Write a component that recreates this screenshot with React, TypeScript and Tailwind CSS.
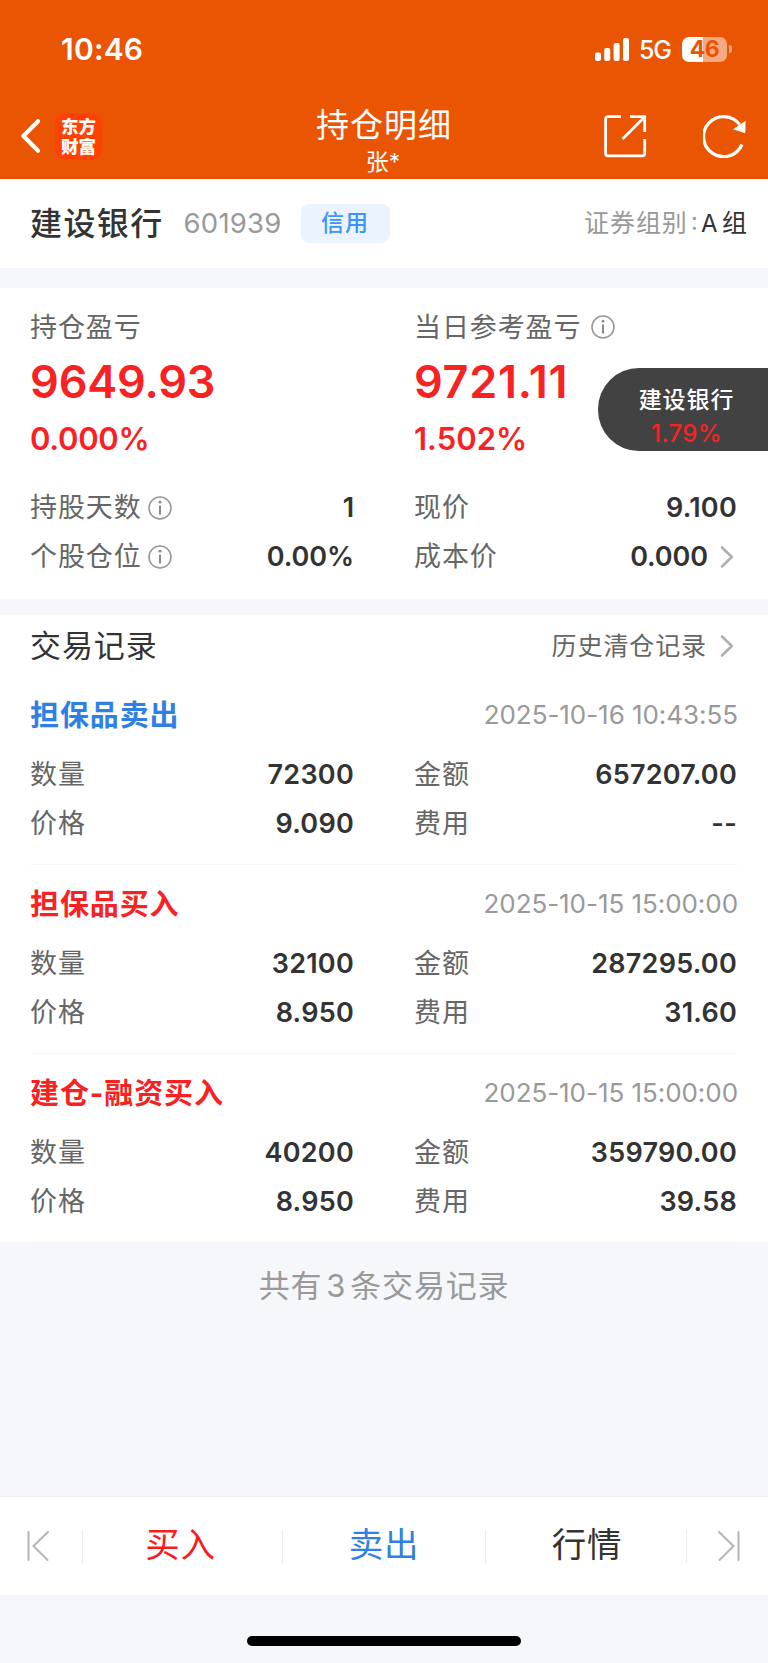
import { ReactNode } from 'react';

type Side = 'buy' | 'sell';

interface TradeRecord {
    title: string;
    side: Side;
    time: string;
    quantity: string;
    amount: string;
    price: string;
    fee: string;
}

const records: TradeRecord[] = [
    { title: '担保品卖出', side: 'sell', time: '2025-10-16 10:43:55', quantity: '72300', amount: '657207.00', price: '9.090', fee: '--' },
    { title: '担保品买入', side: 'buy', time: '2025-10-15 15:00:00', quantity: '32100', amount: '287295.00', price: '8.950', fee: '31.60' },
    { title: '建仓-融资买入', side: 'buy', time: '2025-10-15 15:00:00', quantity: '40200', amount: '359790.00', price: '8.950', fee: '39.58' },
];

const InfoIcon = () => (
    <svg className="w-6 h-6 shrink-0" viewBox="0 0 24 24" fill="none" stroke="#999" strokeWidth="1.6">
        <circle cx="12" cy="12" r="11" />
        <path d="M12 9.5v9" stroke="#888" strokeWidth="2" />
        <circle cx="12" cy="6.2" r="1.4" fill="#888" stroke="none" />
    </svg>
);

const Chevron = () => (
    <svg className="w-3.5 h-6 shrink-0" viewBox="0 0 14 24" fill="none" stroke="#b0b0b0" strokeWidth="2.6" strokeLinecap="round" strokeLinejoin="round">
        <path d="M2 2.5 11.8 12 2 21.5" />
    </svg>
);

// Status bar: clock, signal bars, network type and battery
const StatusBar = () => (
    <div className="flex items-center h-[98px] pl-[61px] pr-9 text-white">
        <span className="text-[30px] leading-none font-semibold tracking-[0.2px]">10:46</span>
        <div className="flex items-center ml-auto">
            <svg className="w-[34px] h-[23px]" viewBox="0 0 34 23" fill="#fff">
                <rect x="0" y="14.5" width="6" height="8.5" rx="2" />
                <rect x="9.2" y="10" width="6" height="13" rx="2" />
                <rect x="18.6" y="5" width="6" height="18" rx="2" />
                <rect x="28" y="0" width="6" height="23" rx="2" />
            </svg>
            <span className="ml-[10px] pt-0.5 text-[25px] leading-none font-medium tracking-[-1.2px] w-[32px]">5G</span>
            <div className="ml-[11px] flex justify-center items-center w-[45px] h-[25px] rounded-[7px] bg-[linear-gradient(90deg,#fff_47%,#f5ab81_47%)] text-[#ea5504] text-[23px] leading-none font-bold tracking-[-0.5px]">
                46
            </div>
            <div className="ml-[2px] w-[3px] h-2 rounded-r-full bg-[#f5ab81]" />
        </div>
    </div>
);

const NavBar = () => (
    <div className="grid grid-cols-[1fr_auto_1fr] h-[81px] text-white">
        <div className="flex items-center h-[76px] pl-5">
            <svg className="w-[22px] h-9" viewBox="0 0 22 36" fill="none" stroke="#fff" strokeWidth="4.2" strokeLinecap="round" strokeLinejoin="round">
                <path d="M18 3.2 3.4 18 18 32.8" />
            </svg>
            <div className="flex items-center justify-center ml-[13px] size-[47px] rounded-[10px] bg-[#ff4203]">
                <span className="w-[36px] text-[17.5px] leading-[20px] font-black text-center whitespace-normal font-['Noto_Sans_CJK_SC',sans-serif]">东方财富</span>
            </div>
        </div>
        <div className="flex flex-col items-center">
            <h1 className="mt-[8px] text-[33px] leading-[38px] font-normal tracking-[1px]">持仓明细</h1>
            <span className="mt-1 pr-0.5 text-[23px] leading-7">张*</span>
        </div>
        <div className="flex items-center justify-end h-[76px] pr-[21px]">
            <svg className="w-[43px] h-11" viewBox="0 0 43 44" fill="none" stroke="#fff" strokeWidth="2.8">
                <path d="M17 2.6H4Q1.6 2.6 1.6 5v34.4q0 2.4 2.4 2.4h34.3q2.4 0 2.4-2.4V25M26 2.6h14.7V18M18.5 25 40 3.4" />
            </svg>
            <svg className="ml-14 size-11" viewBox="0 0 44 44" fill="none" stroke="#fff" strokeWidth="3.2">
                <path d="M39 30.5A20 20 0 1 1 36.6 10.6" />
                <path d="m30 15.2 12.6-8.4-.3 12.4z" fill="#fff" stroke="none" />
            </svg>
        </div>
    </div>
);

const Field = ({ label, value, info, arrow }: { label: string; value: string; info?: boolean; arrow?: boolean }) => (
    <div className="flex items-center h-[49px]">
        <span className="text-[27px] tracking-[0.9px] text-[#666]">{label}</span>
        {info && <span className="ml-[6px] pb-px"><InfoIcon /></span>}
        <span className={`ml-auto text-[27px] font-semibold text-[#333] ${info || arrow ? 'tracking-[-0.1px]' : 'tracking-[0.25px]'}`}>{value}</span>
        {arrow && <span className="flex ml-3 mr-[3px] pb-px"><Chevron /></span>}
    </div>
);

const Profit = ({ label, value, percent, info, wide }: { label: string; value: string; percent: string; info?: boolean; wide?: boolean }) => (
    <div className="text-[#f82222]">
        <div className="flex items-center h-10 text-[27px] tracking-[0.9px] text-[#666]">
            {label}
            {info && <span className="ml-[10px] pb-0.5"><InfoIcon /></span>}
        </div>
        <div className={`mt-[9px] text-[45px] leading-[50px] font-semibold ${wide ? 'tracking-[0.7px]' : 'tracking-[-0.15px]'}`}>{value}</div>
        <div className={`mt-[13px] text-[31px] leading-[38px] font-semibold ${wide ? '' : 'tracking-[-0.3px]'}`}>{percent}</div>
    </div>
);

const TwoColumns = ({ children }: { children: ReactNode }) => (
    <div className="grid grid-cols-[324px_323px] gap-x-[60px]">{children}</div>
);

const Trade = ({ record }: { record: TradeRecord }) => (
    <li className="h-[189px] pt-[19px] border-b border-[#f6f6f6]">
        <div className="flex items-center justify-between h-[42px]">
            <span className={`text-[29px] tracking-[0.9px] font-bold ${record.side === 'buy' ? 'text-[#f82222]' : 'text-[#3080e3]'}`}>{record.title}</span>
            <span className="pb-[3px] text-[26px] tracking-[-0.05px] text-[#999]">{record.time}</span>
        </div>
        <div className="mt-[14px]">
            <TwoColumns>
                <Field label="数量" value={record.quantity} />
                <Field label="金额" value={record.amount} />
                <Field label="价格" value={record.price} />
                <Field label="费用" value={record.fee} />
            </TwoColumns>
        </div>
    </li>
);

const StepIcon = ({ flip }: { flip?: boolean }) => (
    <svg className={`w-6 h-8 ${flip ? '-scale-x-100' : ''}`} viewBox="0 0 24 32" fill="none" stroke="#b5b5b5" strokeWidth="2" strokeLinecap="round">
        <path d="M2.5 2v28M22 2 7.5 16 21.5 30" />
    </svg>
);

const Separator = () => <div className="w-px h-[33px] bg-[#ececec]" />;

function App() {
    return (
        <div className="flex flex-col w-[768px] h-[1663px] overflow-hidden bg-[#f5f7fa] font-['Inter','Noto_Sans_CJK_SC',sans-serif] whitespace-nowrap">
            <header className="h-[179px] bg-[#ea5504]">
                <StatusBar />
                <NavBar />
            </header>

            <section className="flex items-center h-[89px] pl-[30px] pr-[21px] bg-white">
                <h2 className="text-[32px] tracking-[1.4px] font-medium text-[#333]">建设银行</h2>
                <span className="ml-5 text-[27.5px] tracking-[0.2px] text-[#999]">601939</span>
                <span className="flex items-center justify-center ml-[19px] mb-px w-[89px] h-[39px] rounded-lg bg-[#eaf3ff] text-[23px] tracking-[1px] font-medium text-[#3c93fb]">信用</span>
                <span className="ml-auto text-[25px] tracking-[0.9px] text-[#999]">证券组别</span>
                <span className="ml-[3px] mr-[3px] pb-1 text-[25px] text-[#999]">:</span>
                <span className="flex gap-[5px] text-[25px] text-[#333]">
                    <span className="text-[24px] tracking-[-0.5px] pt-px">A</span>
                    <span>组</span>
                </span>
            </section>

            <section className="relative mt-5 h-[311px] pt-5 pl-[30px] bg-white">
                <TwoColumns>
                    <Profit label="持仓盈亏" value="9649.93" percent="0.000%" />
                    <Profit label="当日参考盈亏" value="9721.11" percent="1.502%" info wide />
                </TwoColumns>
                <div className="mt-[26px]">
                    <TwoColumns>
                        <Field label="持股天数" value="1" info />
                        <Field label="现价" value="9.100" />
                        <Field label="个股仓位" value="0.00%" info />
                        <Field label="成本价" value="0.000" arrow />
                    </TwoColumns>
                </div>
                {/* Floating quote pill stuck to the right edge */}
                <div className="absolute right-0 top-[80px] flex flex-col items-center w-[170px] h-[83px] pt-4 pl-[7px] rounded-l-[41px] bg-[#424242]">
                    <span className="text-[23px] leading-8 tracking-[0.9px] font-medium text-white">建设银行</span>
                    <span className="mt-[2px] text-[24px] leading-8 font-medium tracking-[0.4px] text-[#f82222]">1.79%</span>
                </div>
            </section>

            <section className="mt-4 h-[627px] px-[30px] bg-white">
                <div className="flex items-center h-[61px] pt-[2px]">
                    <h2 className="text-[31px] tracking-[0.9px] text-[#333]">交易记录</h2>
                    <span className="ml-auto pt-px text-[25px] tracking-[0.9px] text-[#666]">历史清仓记录</span>
                    <span className="flex ml-[13px] mr-[4px] pb-px"><Chevron /></span>
                </div>
                <ul>
                    {records.map((record, i) => (
                        <Trade key={i} record={record} />
                    ))}
                </ul>
            </section>

            <p className="mt-5 h-12 leading-[48px] text-center text-[31px] tracking-[0.8px] text-[#999]">
                共有<span className="mx-1">3</span>条交易记录
            </p>

            <footer className="mt-auto">
                <nav className="flex items-center h-[99px] border-t border-[#eee] bg-white text-[34.5px] tracking-[0.8px]">
                    <span className="flex justify-center w-[82px] pr-[6px]"><StepIcon /></span>
                    <Separator />
                    <span className="w-[199px] text-center text-[#fb1b1b] pr-1 pb-0.5">买入</span>
                    <Separator />
                    <span className="w-[202px] text-center text-[#3080e3] pb-0.5">卖出</span>
                    <Separator />
                    <span className="w-[200px] text-center text-[#333] pl-0.5 pb-0.5">行情</span>
                    <Separator />
                    <span className="flex flex-1 justify-center pl-[3px]"><StepIcon flip /></span>
                </nav>
                <div className="flex justify-center h-[68px] pt-[41px]">
                    <div className="w-[274px] h-[10px] rounded-full bg-black" />
                </div>
            </footer>
        </div>
    );
}

export default App;
